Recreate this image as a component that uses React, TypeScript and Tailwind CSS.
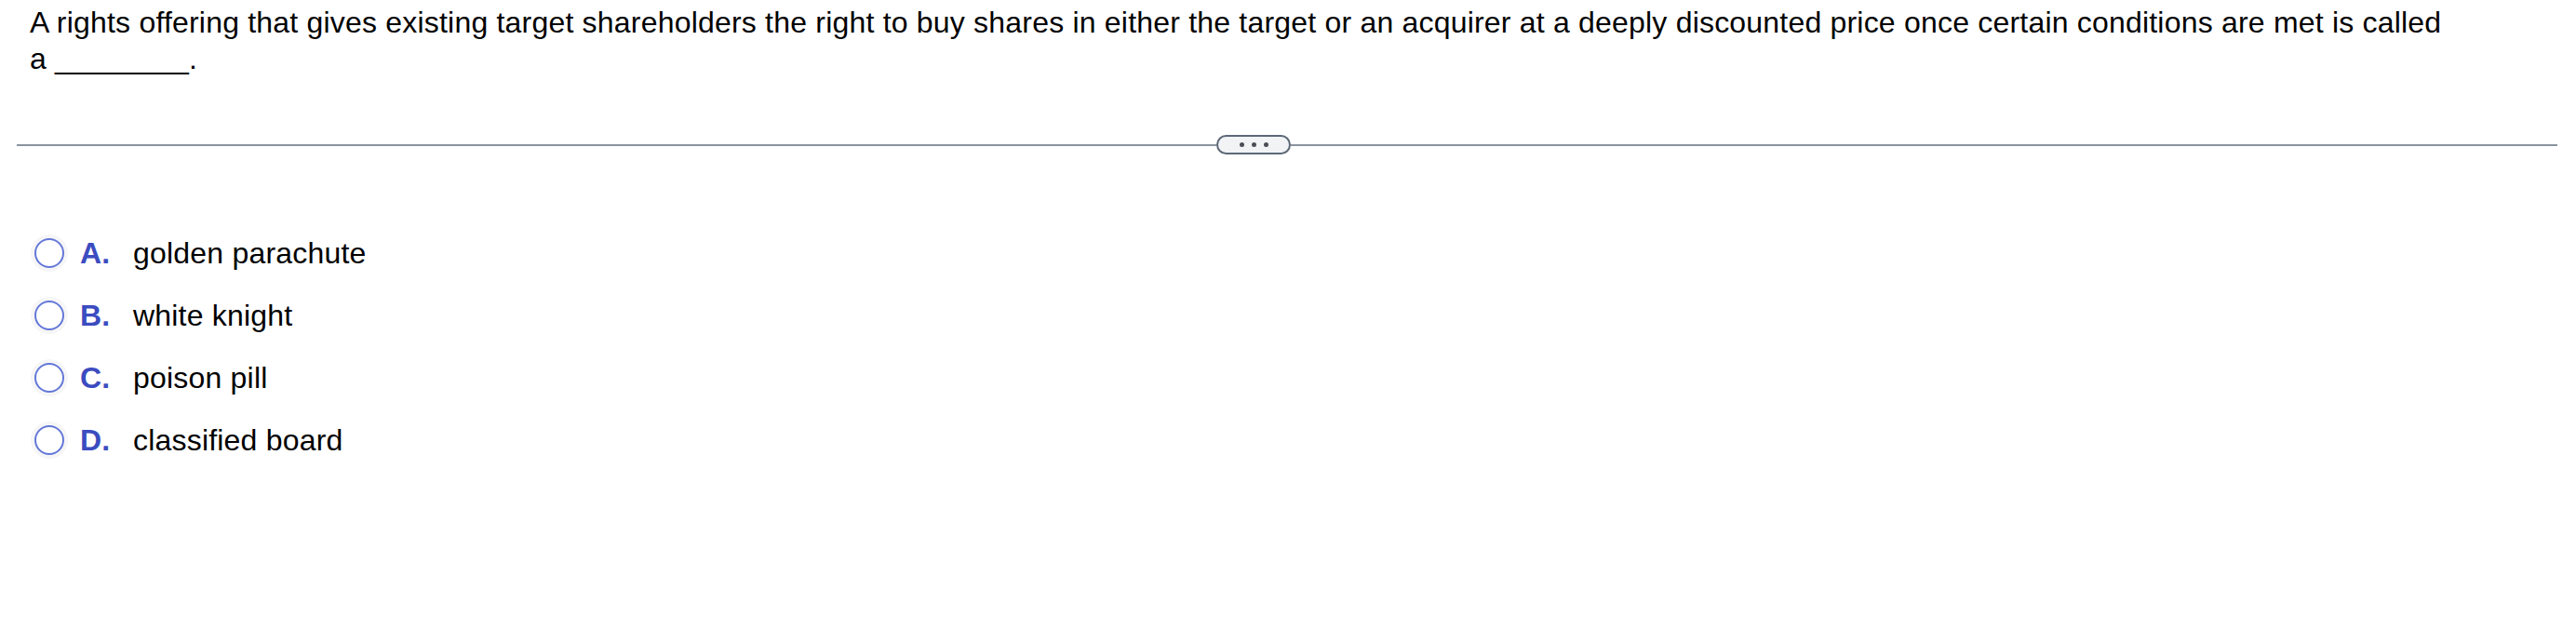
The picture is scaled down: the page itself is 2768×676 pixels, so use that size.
import React from "react";

const options = [
  { key: "A.", text: "golden parachute" },
  { key: "B.", text: "white knight" },
  { key: "C.", text: "poison pill" },
  { key: "D.", text: "classified board" },
];

function Radio() {
  return (
    <span className="block w-[32px] h-[32px] shrink-0 rounded-full border-[2.5px] border-[#6478d8] bg-white shadow-[0_0_0_4px_#f6f6f6]" />
  );
}

export default function App() {
  return (
    <div className="w-full h-[676px] bg-white text-black tracking-[0.2px] font-['Liberation_Sans',Arial,sans-serif]">
      {/* Question */}
      <div className="pl-[32px] pt-[5px] text-[32px] leading-[39px]">
        A rights offering that gives existing target shareholders the right to buy shares in either the target or an acquirer at a deeply discounted price once certain conditions are met is called
        <br />a ________.
      </div>

      {/* Divider with expand pill */}
      <div className="mt-[62px] ml-[18px] mr-[20px] flex items-center">
        <div className="w-[1289px] h-[2px] bg-[#8a939f]" />
        <div className="w-[80px] h-[21px] shrink-0 rounded-full border-2 border-[#5d6877] bg-[#f1f3f5] flex items-center justify-center gap-[8px]">
          <span className="w-[5px] h-[5px] rounded-full bg-[#4b4f55]" />
          <span className="w-[5px] h-[5px] rounded-full bg-[#4b4f55]" />
          <span className="w-[5px] h-[5px] rounded-full bg-[#4b4f55]" />
        </div>
        <div className="flex-1 h-[2px] bg-[#8a939f]" />
      </div>

      {/* Choices */}
      <div className="mt-[72px] flex flex-col">
        {options.map((o) => (
          <div key={o.key} className="h-[67px] pl-[37px] flex items-center text-[32px]">
            <Radio />
            <span className="ml-[17px] w-[57px] font-bold text-[#3b4cc0]">{o.key}</span>
            <span>{o.text}</span>
          </div>
        ))}
      </div>
    </div>
  );
}
